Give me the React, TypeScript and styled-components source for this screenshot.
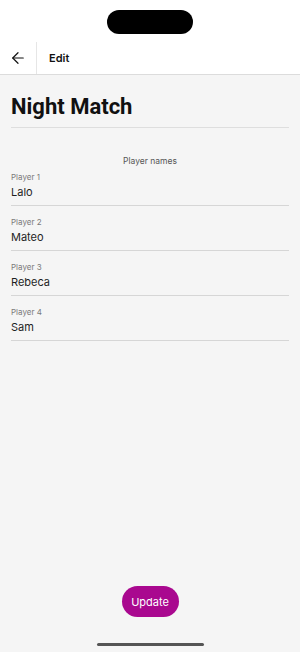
import { ArrowLeft } from "lucide-react";
import styled, { createGlobalStyle } from "styled-components";

const players = [
  { id: 1, label: "Player 1", name: "Lalo" },
  { id: 2, label: "Player 2", name: "Mateo" },
  { id: 3, label: "Player 3", name: "Rebeca" },
  { id: 4, label: "Player 4", name: "Sam" },
];

const GlobalStyle = createGlobalStyle`
  * {
    box-sizing: border-box;
  }
  body {
    margin: 0;
    font-family: Inter, "Noto Sans", sans-serif;
    background: #f5f5f5;
  }
`;

const Phone = styled.div`
  width: 300px;
  height: 652px;
  display: flex;
  flex-direction: column;
  background: #f5f5f5;
  overflow: hidden;
`;

const StatusBar = styled.div`
  height: 42px;
  background: #fff;
  display: flex;
  justify-content: center;
  padding-top: 10px;
`;

const Notch = styled.div`
  width: 86px;
  height: 24px;
  border-radius: 12px;
  background: #000;
`;

const Header = styled.header`
  height: 33px;
  background: #fff;
  display: flex;
  align-items: stretch;
  border-bottom: 1px solid #dcdcdc;
`;

const BackButton = styled.button`
  width: 37px;
  border: none;
  border-right: 1px solid #e6e6e6;
  background: transparent;
  padding: 0;
  display: flex;
  align-items: center;
  justify-content: center;
  color: #111;
  cursor: pointer;
`;

const HeaderTitle = styled.span`
  display: flex;
  align-items: center;
  padding-left: 12px;
  font-size: 11px;
  font-weight: 600;
  color: #111;
`;

const Content = styled.main`
  flex: 1;
  padding: 19px 11px 0;
  display: flex;
  flex-direction: column;
`;

const Title = styled.h1`
  margin: 0;
  font-family: Roboto, Inter, sans-serif;
  font-size: 22px;
  line-height: 26px;
  font-weight: 700;
  color: #111;
  padding-bottom: 7px;
  border-bottom: 1px solid #dedede;
`;

const SectionLabel = styled.div`
  margin-top: 27px;
  text-align: center;
  font-size: 8.5px;
  line-height: 12px;
  color: #555;
`;

const Field = styled.div<{ first?: boolean }>`
  display: flex;
  flex-direction: column;
  gap: 3px;
  margin-top: ${(p) => (p.first ? "5px" : "11px")};
  padding-bottom: 6px;
  border-bottom: 1px solid #d6d6d6;
`;

const FieldLabel = styled.label`
  font-size: 8px;
  line-height: 10px;
  color: #7a7a7a;
`;

const FieldValue = styled.div`
  font-size: 11px;
  line-height: 14px;
  color: #1f1f1f;
`;

const Footer = styled.footer`
  display: flex;
  flex-direction: column;
  align-items: center;
  gap: 26px;
  padding-bottom: 6px;
`;

const UpdateButton = styled.button`
  width: 57px;
  height: 31px;
  border: none;
  border-radius: 16px;
  background: #a9088f;
  color: #fff;
  font-family: Inter, "Noto Sans", sans-serif;
  font-size: 11px;
  padding: 0;
  cursor: pointer;
`;

const HomeIndicator = styled.div`
  width: 107px;
  height: 3px;
  border-radius: 2px;
  background: #555;
`;

const App = () => {
  return (
    <>
      <GlobalStyle />
      <Phone>
        <StatusBar>
          <Notch />
        </StatusBar>
        <Header>
          <BackButton aria-label="Back">
            <ArrowLeft size={18} strokeWidth={1.6} />
          </BackButton>
          <HeaderTitle>Edit</HeaderTitle>
        </Header>

        <Content>
          <Title>Night Match</Title>
          <SectionLabel>Player names</SectionLabel>
          {players.map(({ id, label, name }, i) => (
            <Field key={id} first={i === 0}>
              <FieldLabel>{label}</FieldLabel>
              <FieldValue>{name}</FieldValue>
            </Field>
          ))}
        </Content>

        <Footer>
          <UpdateButton>Update</UpdateButton>
          <HomeIndicator />
        </Footer>
      </Phone>
    </>
  );
};

export default App;
